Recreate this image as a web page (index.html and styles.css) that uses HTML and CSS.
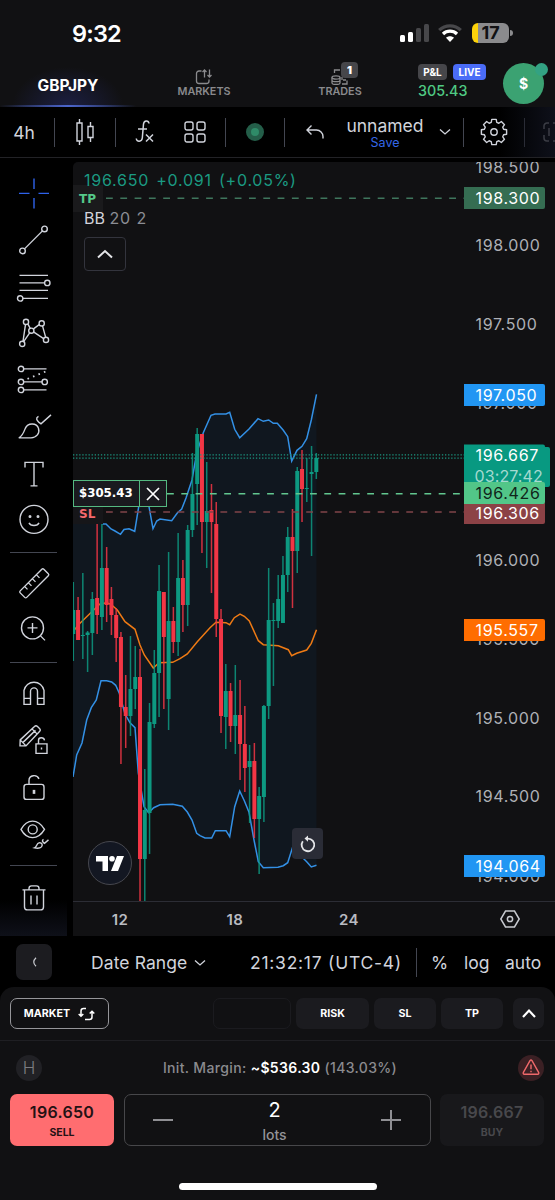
FILE: index.html
```html
<!DOCTYPE html>
<html lang="en">
<head>
    <meta charset="UTF-8">
    <meta name="viewport" content="width=device-width, initial-scale=1.0">
    <title>GBPJPY</title>
    <link rel="stylesheet" href="styles.css">
</head>
<body>
    <div class="status-bar">
        <span class="clock">9:32</span>
        <div class="status-icons">
            <svg width="29" height="18" viewBox="0 0 29 18">
                <rect x="0" y="11" width="5" height="7" rx="1.5" fill="#fff"/>
                <rect x="8" y="8" width="5" height="10" rx="1.5" fill="#fff"/>
                <rect x="16" y="4" width="5" height="14" rx="1.5" fill="#47474a"/>
                <rect x="24" y="0" width="5" height="18" rx="1.5" fill="#47474a"/>
            </svg>
            <svg width="24" height="18" viewBox="0 0 24 18" fill="none" stroke-width="3.2">
                <path d="M1.2 6.2C7.2 .3 16.8 .3 22.8 6.2" stroke="#47474a"/>
                <path d="M5 10c3.9-3.8 10.1-3.8 14 0" stroke="#fff"/>
                <path d="M12 18 8 13.8c2.3-2 5.7-2 8 0z" fill="#fff"/>
            </svg>
            <div class="battery"><span>17</span></div>
        </div>
    </div>

    <div class="tabs">
        <div class="tab active">GBPJPY</div>
        <div class="tab">
            <svg width="18" height="16" viewBox="0 0 18 16" fill="none" stroke="#8a8a8d" stroke-width="1.3">
                <path d="M6.500 2H4a2.500 2.500 0 0 0-2.500 2.500V12A2.500 2.500 0 0 0 4 14.500h7.500A2.500 2.500 0 0 0 14 12v-1.500M9.500 8.500V1M7.500 3l2-2 2 2M14.500 .5V8M12.500 6l2 2 2-2"/>
            </svg>
            <span>MARKETS</span>
        </div>
        <div class="tab">
            <svg width="18" height="16" viewBox="0 0 18 16" fill="none" stroke="#8a8a8d" stroke-width="1.3">
                <ellipse cx="5" cy="8.500" rx="4" ry="1.600"/>
                <path d="M1 8.500V14c0 2 8 2 8 0V8.500M1 11.200c0 2 8 2 8 0M3.500 4V1H9M11 15h5v-3.500M12 11h3M11 8v3"/>
            </svg>
            <span>TRADES</span>
            <b class="badge">1</b>
        </div>
        <div class="account">
            <div class="account-tags"><span class="tag">P&amp;L</span><span class="tag live">LIVE</span></div>
            <div class="profit">305.43</div>
        </div>
        <div class="avatar">$</div>
    </div>

    <div class="toolbar">
        <div class="tool interval">4h</div>
        <i class="sep"></i>
        <div class="tool wide">
            <svg width="20" height="28" viewBox="0 0 20 28" fill="none" stroke="#d1d4dc" stroke-width="1.4">
                <path d="M2 5h5v18H2zM4.500 1v4M4.500 23v4M13 8.500h5v11h-5zM15.500 4v4.500M15.500 19.500V24"/>
            </svg>
        </div>
        <i class="sep"></i>
        <div class="tool fx">
            <svg width="20" height="26" viewBox="0 0 20 26" fill="none" stroke="#d1d4dc" stroke-width="1.5">
                <path d="M14 4.500C13.500 1 9 1 8.500 5l-1.200 14c-.3 4-5.800 4.500-6 .5M3 10h9M11 15.500l7 7M18 15.500l-7 7"/>
            </svg>
        </div>
        <div class="tool layouts">
            <svg width="22" height="22" viewBox="0 0 22 22" fill="none" stroke="#d1d4dc" stroke-width="1.4">
                <rect x="1" y="1" width="8" height="8" rx="2"/><rect x="13" y="1" width="8" height="8" rx="2"/>
                <rect x="1" y="13" width="8" height="8" rx="2"/><rect x="13" y="13" width="8" height="8" rx="2"/>
            </svg>
        </div>
        <i class="sep"></i>
        <div class="tool connection"><span class="live-dot"></span></div>
        <i class="sep"></i>
        <div class="tool undo">
            <svg width="18" height="14" viewBox="0 0 18 14" fill="none" stroke="#d1d4dc" stroke-width="1.4">
                <path d="M5.500 .5 1 5l4.500 4.500M1 5h9.500a6.500 6.500 0 0 1 6.500 6.500v2"/>
            </svg>
        </div>
        <div class="tool layout-name">unnamed<small>Save</small></div>
        <div class="tool arrow">
            <svg width="12" height="8" viewBox="0 0 12 8" fill="none" stroke="#d1d4dc" stroke-width="1.300"><path d="m1 1.500 5 4.500 5-4.500"/></svg>
        </div>
        <i class="sep"></i>
        <div class="tool gear">
            <svg width="28" height="28" viewBox="0 0 28 28" fill="none" stroke="#d1d4dc" stroke-width="1.400" stroke-linejoin="round">
                <circle cx="14" cy="14" r="3.200"/>
                <path id="gear"/>
            </svg>
        </div>
        <i class="sep faint"></i>
        <svg class="fullscreen" width="12" height="20" viewBox="0 0 12 20" fill="none" stroke="#3b3d45" stroke-width="1.500">
            <path d="M6 1H4a3 3 0 0 0-3 3v3M1 13v3a3 3 0 0 0 3 3h2M10 1h2M10 19h2M6 6v8"/>
        </svg>
    </div>

    <div class="workspace">
        <div class="drawing-bar">
            <svg class="draw-icon cross" viewBox="0 0 32 32"><path d="M16 1v10.500M16 20.500V31M1 16h10.500M20.500 16H31"/></svg>
            <svg class="draw-icon" viewBox="0 0 32 32"><path d="M6.500 24.500 24.500 6.500"/><circle cx="4.500" cy="26.500" r="2.800"/><circle cx="26.500" cy="4.500" r="2.800"/></svg>
            <svg class="draw-icon" viewBox="0 0 32 32"><path d="M1.500 4H30M1.500 11.500h25M1.500 19H30M4.500 27H30"/><circle cx="29.300" cy="11.500" r="2.700"/><circle cx="2.200" cy="27" r="2.700"/></svg>
            <svg class="draw-icon" viewBox="0 0 32 32"><path d="M7.500 7 5 24M9.800 6.500l2.700 5M12 15l-6.500 9.500M15.500 11.500l6-4.500M15.500 14.500l10.500 7M24.500 8.500l3.200 11.500"/><circle cx="8" cy="4.500" r="2.600"/><circle cx="13.300" cy="13.300" r="2.600"/><circle cx="23.700" cy="6" r="2.600"/><circle cx="4.200" cy="26.500" r="2.600"/><circle cx="28" cy="22.500" r="2.600"/></svg>
            <svg class="draw-icon" viewBox="0 0 32 32"><path d="M5.500 4.500h23M5.500 17.500h18.500M5.500 25.500h23"/><path d="M9.500 14.500 28 7" stroke-dasharray="1.600 4.300" stroke-width="1.800"/><circle cx="3" cy="4.500" r="2.700"/><circle cx="3" cy="17.500" r="2.700"/><circle cx="3" cy="25.500" r="2.700"/><circle cx="26.700" cy="17.500" r="2.700"/></svg>
            <svg class="draw-icon" viewBox="0 0 32 32"><path d="M.8 26.500c3.500-1.500 5-5.500 6.500-9.500 2.500-6 11.500-5.500 13.200 0C22 22 18.500 26.300 13 26.500zM20.500 5c-3 1.500-2 4 .5 6l2 1.500L33 3.500"/></svg>
            <svg class="draw-icon" viewBox="0 0 32 32"><path d="M7 9V4h18v5M16 4v23.500M12.500 27.500h7"/></svg>
            <svg class="draw-icon" viewBox="0 0 32 32"><circle cx="16" cy="15" r="14"/><path d="M11 18.500c1.500 3.500 8.500 3.500 10 0"/><circle cx="12" cy="12" r=".8"/><circle cx="20" cy="12" r=".8"/></svg>
            <hr>
            <svg class="draw-icon" viewBox="0 0 32 32"><path d="M2.200 23.500 23.800 1.900q1-1 2 0l4.500 4.500q1 1 0 2L8.700 30q-1 1-2 0l-4.500-4.500q-1-1 0-2zM6.500 19l3 3M10.500 15.500l3 3M14.500 11.500l3 3M18.500 7.500l3 3"/></svg>
            <svg class="draw-icon" viewBox="0 0 32 32"><circle cx="14.500" cy="13.500" r="11"/><path d="M22.500 21.500 27 26M14.500 8.500v10M9.500 13.500h10"/></svg>
            <hr>
            <svg class="draw-icon" viewBox="0 0 32 32"><path d="M6 27V13a10.200 10.200 0 0 1 20 0v14h-6.500V14a3.500 3.500 0 0 0-7 0v13zM6 21h6.500M19.500 21H26"/></svg>
            <svg class="draw-icon" viewBox="0 0 32 32"><path d="M2.200 15.500 16.500 2.200q1.500-1.500 3 0l2 2q1.500 1.500 0 3L8 21.500H2zM2.200 15.500 8 21.500M14 4.500l5.500 5.500M5 18 17.500 6M18 19.500h11v9.500H18zM20.500 19.500V16c0-3.500 5.500-3.500 6 0M23.500 23v2"/></svg>
            <svg class="draw-icon" viewBox="0 0 32 32"><rect x="6" y="13" width="20" height="15" rx="2.500"/><path d="M11 13V9c0-5.500 8-6.500 10-1.500"/><path d="M16 18.500v4" stroke-width="2.600"/></svg>
            <svg class="draw-icon" viewBox="0 0 32 32"><path d="M3 11c6-11 17-11 23.500 0C20 22 9 22 3 11z"/><circle cx="14.700" cy="11" r="4.500"/><path d="M16.500 29.500c2.500-1 2-4.500 4.500-5 3-.5 4 2 2.500 4-1.500 1.500-4.500 1.500-7 1zM25.500 21c-2 1-1 2.500 1 4l4-3.500"/></svg>
            <hr>
            <svg class="draw-icon" viewBox="0 0 32 32"><path d="M4.500 8.500h23M11 8.500V7Q11 4.500 13.500 4.500h5Q21 4.500 21 7v1.500M6.500 8.500v17q0 3 3 3h13q3 0 3-3v-17M13 14v9M19 14v9"/></svg>
        </div>

        <div class="chart">
            <svg class="chart-canvas" width="482" height="774" viewBox="73 162 482 774">
                <g id="bands"></g>
                <g id="candles"></g>
                <g id="lines"></g>
                <path d="M73 901.500h482" stroke="#2c2d35"/>
                <g id="scale" class="scale-text"></g>
                <g class="time-text"><text x="120" y="925">12</text><text x="235" y="925">18</text><text x="349" y="925">24</text></g>
                <g fill="none" stroke="#c8cad0" stroke-width="1.500"><path d="M505.500 911h9l4.700 8-4.700 8h-9l-4.700-8z"/><circle cx="510" cy="919" r="2.600"/></g>
            </svg>

            <div class="legend">
                <div class="legend-price">196.650 <span>+0.091 (+0.05%)</span></div>
                <div class="legend-study">BB <span>20 2</span></div>
                <div class="collapse">
                    <svg width="18" height="10" viewBox="0 0 18 10" fill="none" stroke="#e4e5e8" stroke-width="2"><path d="M2 8.500 9 2l7 6.500"/></svg>
                </div>
            </div>
            <div class="line-label tp-label">TP</div>
            <div class="line-label sl-label">SL</div>
            <div class="position"><span>$305.43</span>
                <svg width="26" height="26" viewBox="0 0 26 26" stroke="#fff" stroke-width="1.700"><path d="m7 7 12 12M19 7 7 19"/></svg>
            </div>
            <div class="tv-logo">
                <svg width="28" height="15" viewBox="0 0 28 15" fill="#fff"><path d="M0 0h12v15H6.500V5.500H0zM21 0h7l-6 15h-7z"/><circle cx="16" cy="2.800" r="2.800"/></svg>
            </div>
            <div class="reset">
                <svg width="18" height="18" viewBox="0 0 18 18" fill="none" stroke="#e4e5e8" stroke-width="1.800"><path d="M3.800 6.300A6.300 6.300 0 1 0 9 3.600H7"/><path d="M9 .5 5.500 3.600 9 6.800z" fill="#e4e5e8" stroke="none"/></svg>
            </div>
        </div>
    </div>

    <div class="range-bar">
        <div class="back">
            <svg width="5" height="10" viewBox="0 0 5 10" fill="none" stroke="#c8cad0" stroke-width="1.200"><path d="M4 .7Q-.5 5 4 9.300"/></svg>
        </div>
        <div class="date-range">Date Range
            <svg width="12" height="8" viewBox="0 0 12 8" fill="none" stroke="#d1d4dc" stroke-width="1.300"><path d="m1 1.500 5 4.500 5-4.500"/></svg>
        </div>
        <div class="time">21:32:17 (UTC-4)</div>
        <i class="sep"></i>
        <div class="percent">%</div>
        <div class="log">log</div>
        <div class="auto">auto</div>
    </div>

    <div class="order-panel">
        <div class="order-options">
            <div class="market">MARKET
                <svg width="17" height="14" viewBox="0 0 17 14" fill="none" stroke="#fff" stroke-width="1.500"><path d="M8 1.500H5.500Q3 1.500 3 4v5M.7 7 3 9.300 5.300 7M7 12.500h4.500q2.500 0 2.500-2.500V4.500M11.700 6.500 14 4.200l2.300 2.300"/></svg>
            </div>
            <div class="option blank"></div>
            <div class="option risk">RISK</div>
            <div class="option">SL</div>
            <div class="option">TP</div>
            <div class="option expand">
                <svg width="16" height="11" viewBox="0 0 16 11" fill="none" stroke="#fff" stroke-width="2.200"><path d="m2 9 6-6.500L14 9"/></svg>
            </div>
        </div>
        <div class="margin-row">
            <span class="round">H</span>
            <p>Init. Margin: <b>~$536.30</b> (143.03%)</p>
            <span class="round warn">
                <svg width="18" height="17" viewBox="0 0 18 17" fill="none" stroke="#f0696b" stroke-width="1.400" stroke-linejoin="round"><path d="M8 1.700q1-1.500 2 0l6.600 11.600q.7 1.700-1 1.900H2.400q-1.700-.2-1-1.900zM9 5.500v4.700M9 11.800v1.400"/></svg>
            </span>
        </div>
        <div class="trade-row">
            <div class="trade sell">196.650<small>SELL</small></div>
            <div class="lots">
                <i class="minus"></i>
                <div class="amount">2<small>lots</small></div>
                <i class="plus"></i>
            </div>
            <div class="trade buy">196.667<small>BUY</small></div>
        </div>
        <div class="home-indicator"></div>
    </div>

    <script src="chart.js"></script>
</body>
</html>
```
FILE: styles.css
```css
* {
    box-sizing: border-box;
}

body {
    margin: 0;
    width: 555px;
    height: 1200px;
    overflow: hidden;
    background: #000;
    color: #d1d4dc;
    font-family: Inter, 'Liberation Sans', sans-serif;
}

svg {
    display: block;
    flex: none;
}

/* Status bar */
.status-bar {
    height: 62px;
    padding: 4px 43px 0 72px;
    display: flex;
    align-items: center;
    justify-content: space-between;
    background: #111113;
}

.clock {
    color: #fff;
    font-size: 23.5px;
    font-weight: 600;
    letter-spacing: -0.8px;
}

.status-icons {
    display: flex;
    align-items: center;
    gap: 9px;
}

.battery {
    position: relative;
    width: 37px;
    height: 20px;
    margin: 0 3px 0 1px;
    border-radius: 6px;
    background: linear-gradient(90deg, #fdd20a 6px, #8b8b8d 6px);
    color: #111113;
    font-size: 18px;
    font-weight: 700;
    line-height: 20px;
    text-align: center;
}

.battery::after {
    content: '';
    position: absolute;
    right: -4px;
    top: 7px;
    width: 3px;
    height: 6px;
    border-radius: 0 3px 3px 0;
    background: #8b8b8d;
}

/* Tabs */
.tabs {
    height: 45px;
    display: flex;
    background: #111113;
}

.tab {
    position: relative;
    width: 136px;
    padding-top: 7px;
    display: flex;
    flex-direction: column;
    align-items: center;
    color: #8a8a8d;
    font-size: 10.8px;
    font-weight: 600;
    line-height: 14px;
}

.tab.active {
    padding-top: 17px;
    color: #fff;
    font-size: 15.5px;
    font-weight: 700;
    background: radial-gradient(ellipse 56px 40px at 50% 100%, #1c1f42, rgba(17, 17, 19, 0));
}

.tab.active::after {
    content: '';
    position: absolute;
    left: 0;
    bottom: 0;
    width: 100%;
    height: 2px;
    background: linear-gradient(90deg, transparent, #4c66cc, transparent);
}

.badge {
    position: absolute;
    left: 69px;
    top: 0;
    width: 17px;
    height: 16px;
    border-radius: 4px;
    background: #46464a;
    color: #fff;
    font-size: 11px;
    line-height: 16px;
    text-align: center;
}

.account {
    width: 85px;
    margin-left: 10px;
    padding-top: 2px;
}

.account-tags {
    display: flex;
    gap: 6px;
}

.tag {
    width: 29px;
    height: 16px;
    border-radius: 4px;
    background: #46464a;
    color: #fff;
    font-size: 10px;
    font-weight: 700;
    line-height: 16px;
    text-align: center;
}

.tag.live {
    width: 33px;
    background: #4a6cf7;
}

.profit {
    margin-top: 2px;
    color: #4fc983;
    font-size: 14.3px;
    font-weight: 500;
    line-height: 18px;
}

.avatar {
    position: relative;
    width: 41px;
    height: 41px;
    margin-top: 1px;
    border-radius: 50%;
    background: #3ba272;
    color: #fff;
    font-size: 14px;
    font-weight: 700;
    line-height: 42px;
    text-align: center;
}

.avatar::after {
    content: '';
    position: absolute;
    right: -4px;
    top: 0;
    width: 13px;
    height: 13px;
    border-radius: 50%;
    background: #33a283;
}

/* Top toolbar */
.toolbar {
    height: 51px;
    display: flex;
    align-items: center;
    background: linear-gradient(90deg, #000 500px, #0e101a);
    border-bottom: 1px solid #222226;
}

.tool {
    flex: none;
    display: flex;
    align-items: center;
    justify-content: center;
}

.sep {
    flex: none;
    width: 1px;
    height: 29px;
    background: #434651;
}

.sep.faint {
    background: #2a2c36;
}

.interval {
    width: 48px;
    margin-right: 6px;
    font-size: 17.5px;
}

.wide { width: 60px; }
.fx { width: 58px; }
.layouts { width: 41px; margin-right: 10px; }
.connection { width: 58px; }
.undo { width: 59px; }
.arrow { width: 37px; }
.gear { width: 60px; }

.live-dot {
    width: 18px;
    height: 18px;
    border-radius: 50%;
    border: 5px solid #245e49;
    background: #2f8b68;
}

.layout-name {
    width: 82px;
    padding-top: 2px;
    flex-direction: column;
    font-size: 17.5px;
    line-height: 20px;
}

.layout-name small {
    color: #3467e8;
    font-size: 12.5px;
    line-height: 14px;
}

.fullscreen {
    margin-left: 18px;
}

/* Workspace */
.workspace {
    height: 778px;
    display: flex;
}

.drawing-bar {
    width: 67px;
    margin-right: 6px;
    padding: 12px 0 0;
    background: linear-gradient(#000 742px, #0e1019);
    display: flex;
    flex-direction: column;
    align-items: center;
}

.drawing-bar hr {
    width: 47px;
    height: 1px;
    margin: 7.7px 0;
    border: 0;
    background: #434651;
}

.draw-icon {
    width: 32px;
    height: 46.75px;
    overflow: visible;
    fill: none;
    stroke: #d1d4dc;
    stroke-width: 1.4;
}

.draw-icon.cross {
    stroke: #2e62ea;
}

/* Chart */
.chart {
    position: relative;
    width: 482px;
    margin-top: 4px;
    background: #111113;
    border-top-left-radius: 5px;
    overflow: hidden;
}

.scale-text {
    font-size: 16px;
    letter-spacing: 0.65px;
}

.scale-text .countdown {
    letter-spacing: 0.1px;
}

.time-text {
    fill: #b9bbc1;
    font-size: 15px;
    font-weight: 600;
    text-anchor: middle;
    letter-spacing: 0.5px;
}

.legend {
    position: absolute;
    left: 11px;
    top: 8px;
    z-index: 2;
    font-size: 16px;
    line-height: 20px;
}

.legend-price {
    color: #1b9a82;
    letter-spacing: 0.75px;
    word-spacing: 2px;
}

.legend-study {
    margin-top: 18px;
}

.legend-study span {
    color: #8b8d94;
    letter-spacing: 0.9px;
}

.collapse {
    width: 42px;
    height: 34px;
    margin-top: 9px;
    border: 1px solid #33343d;
    border-radius: 4px;
    display: flex;
    align-items: center;
    justify-content: center;
}

.line-label {
    position: absolute;
    left: 0;
    width: 30px;
    height: 27px;
    padding-left: 6px;
    background: #1a1a1c;
    font-family: 'DejaVu Sans', sans-serif;
    font-size: 12px;
    font-weight: 700;
    line-height: 29px;
}

.tp-label {
    top: 23px;
    color: #55c98a;
}

.sl-label {
    top: 338px;
    height: 24px;
    background: #161619;
    color: #f5696d;
    line-height: 28px;
}

.position {
    position: absolute;
    left: 0;
    top: 318px;
    width: 94px;
    height: 27px;
    border: 1.5px solid #55b981;
    background: #1a1a1f;
    display: flex;
    align-items: center;
    justify-content: space-between;
}

.position span {
    width: 67px;
    border-right: 1px solid #55b981;
    padding-left: 5px;
    color: #fff;
    font-family: 'DejaVu Sans', sans-serif;
    font-size: 11.8px;
    font-weight: 700;
    line-height: 27px;
}

.tv-logo {
    position: absolute;
    left: 15px;
    top: 679px;
    width: 44px;
    height: 44px;
    border: 1.5px solid #46474e;
    border-radius: 50%;
    background: #131722;
    display: flex;
    align-items: center;
    justify-content: center;
}

.reset {
    position: absolute;
    left: 219px;
    top: 666px;
    width: 31px;
    height: 31px;
    border-radius: 4px;
    background: #2a2c36;
    display: flex;
    align-items: center;
    justify-content: center;
}

/* Range bar */
.range-bar {
    height: 51px;
    padding: 2px 0 0 16px;
    display: flex;
    align-items: center;
    font-size: 17.5px;
    white-space: nowrap;
}

.back {
    width: 36px;
    height: 36px;
    margin-top: -2px;
    border-radius: 7px;
    background: #1c1c20;
    display: flex;
    align-items: center;
    justify-content: center;
}

.date-range {
    width: 159px;
    margin-left: 39px;
    display: flex;
    align-items: center;
    gap: 7px;
    letter-spacing: 0.1px;
}

.time {
    width: 166px;
    letter-spacing: 0.75px;
}

.percent { width: 33px; margin-left: 14px; }
.log { width: 41px; }

/* Order panel */
.order-panel {
    height: 213px;
    border-radius: 14px 14px 0 0;
    background: #111113;
}

.order-options {
    height: 54px;
    padding: 11px 11px 0 10px;
    border-bottom: 1px solid #1f1f23;
    display: flex;
    gap: 5px;
}

.market {
    width: 99px;
    height: 31px;
    margin-right: auto;
    border: 1px solid #96969a;
    border-radius: 7px;
    color: #fff;
    font-size: 10.7px;
    font-weight: 700;
    display: flex;
    align-items: center;
    justify-content: center;
    gap: 8px;
}

.option {
    width: 62px;
    height: 31px;
    border-radius: 7px;
    background: #1b1b1f;
    color: #fff;
    font-size: 10.7px;
    font-weight: 700;
    display: flex;
    align-items: center;
    justify-content: center;
}

.option.blank {
    width: 78px;
    border: 1px solid #1b1b1f;
    background: none;
}

.option.risk { width: 73px; }

.option.expand {
    width: 31px;
    margin-left: 5px;
}

.margin-row {
    height: 53px;
    padding: 0 11px 0 16px;
    display: flex;
    align-items: center;
    justify-content: space-between;
}

.margin-row p {
    margin: 0;
    padding-left: 0;
    color: #8b8b8f;
    font-size: 14px;
    font-weight: 500;
    letter-spacing: 0.35px;
}

.margin-row b {
    color: #fff;
    font-weight: 600;
}

.round {
    width: 26px;
    height: 26px;
    border-radius: 50%;
    background: #212125;
    color: #7b7b80;
    font-size: 17px;
    font-weight: 300;
    line-height: 26px;
    text-align: center;
}

.warn {
    background: #3b2024;
    display: flex;
    align-items: center;
    justify-content: center;
}

.trade-row {
    padding: 0 11px 0 10px;
    display: flex;
    justify-content: space-between;
}

.trade {
    width: 104px;
    height: 52px;
    padding-top: 7px;
    border-radius: 7px;
    font-size: 16px;
    font-weight: 600;
    letter-spacing: 0.3px;
    line-height: 22px;
    text-align: center;
}

.trade small {
    display: block;
    font-size: 10.5px;
    font-weight: 700;
    letter-spacing: 0;
    line-height: 20px;
}

.sell {
    background: #ff6d70;
    color: #241214;
}

.buy {
    background: #18181b;
    color: #48484c;
}

.lots {
    width: 307px;
    height: 52px;
    padding: 0 28px;
    border: 1px solid #47474a;
    border-radius: 7px;
    display: flex;
    align-items: center;
    justify-content: space-between;
}

.amount {
    padding: 4px 5px 0 0;
    color: #fff;
    font-size: 20px;
    line-height: 26px;
    text-align: center;
}

.amount small {
    display: block;
    color: #939397;
    font-size: 14px;
    font-weight: 500;
    line-height: 24px;
}

.minus,
.plus {
    width: 20px;
    height: 20px;
    background: linear-gradient(#8f8f93, #8f8f93) center / 20px 2px no-repeat;
}

.plus {
    background:
        linear-gradient(#8f8f93, #8f8f93) center / 20px 2px no-repeat,
        linear-gradient(#8f8f93, #8f8f93) center / 2px 20px no-repeat;
}

.home-indicator {
    width: 198px;
    height: 7px;
    margin: 37px 0 0 179px;
    border-radius: 4px;
    background: #fff;
}
```
FILE: chart.js
```js
const UP = '#0d9981';
const DOWN = '#f23645';

// [high, low, body top, body bottom, direction]
const candles = [
    [582, 661, 610, 634, 1], [597, 640, 610, 640, 0], [573, 659, 635, 636, 1], [631, 672, 632.5, 635, 1],
    [592, 655, 599, 633, 1], [524, 634, 598, 615, 0], [524, 630, 568, 617, 1], [547, 622, 568, 605, 0],
    [587, 635, 599, 615, 0], [608, 662, 615, 638, 0], [632, 764, 637, 707, 0], [675, 748, 707, 716, 0],
    [636, 736, 689, 716, 1], [646, 709, 677, 689, 1], [649, 901, 677, 859, 0], [769, 901, 810, 859, 1],
    [703, 854, 722, 813, 1], [650, 728, 673, 724, 1], [565, 717, 591, 673, 1], [592, 709, 592, 637, 0],
    [552, 730, 621, 699, 1], [607, 653, 621, 642, 0], [533, 656, 578, 642, 1], [560, 632, 578, 605, 0],
    [525, 626, 530, 605, 1], [453, 537, 494, 530, 1], [428, 525, 434, 484, 1], [434, 553, 434, 522, 0],
    [462, 568, 511, 522, 1], [484, 593, 510, 522, 0], [502, 637, 524, 619, 0], [609, 733, 619, 716, 0],
    [664, 749, 691, 717, 1], [683, 742, 691, 726, 0], [665, 754, 715, 726, 1], [680, 780, 715, 744, 0],
    [706, 792, 744, 768, 0], [745, 823, 761, 767, 1], [743, 838, 761, 819, 0], [787, 874, 796, 819, 1],
    [705, 822, 706, 797, 1], [568, 719, 620, 706, 1], [603, 686, 620, 621, 1], [575, 628, 599, 621, 1],
    [556, 623, 575, 623, 1], [527, 592, 537, 575, 1], [509, 608, 537, 551, 0], [467, 573, 471, 551, 1],
    [450, 522, 469, 489, 0], [458, 502, 488, 489, 1], [446, 556, 472, 474, 1], [453, 479, 458, 472, 1]
];

const upper = '73,522 100,522 103,524 106,524 111,529 115,531 120.500,534.300 124,529.500 129,528.700 134.700,531.300 138.700,506.700 141,498 146,498 149,506.700 153,528.700 156.700,521 160,519 171.700,520.700 177.300,513 181.700,509 186,498 192,480 196.700,453 203.300,432.700 211,415.300 215,414 226,414 229.700,412.300 234.700,429.300 239.700,437.700 249,429 258,418.700 263.300,421.300 268.700,420 273.300,423.300 277.300,423.300 283.300,430.300 287.700,436.700 291.700,461 297,450.300 302,446.300 306.700,438.700 311.300,420 316.500,394.300';
const lower = '73,777 76.700,755 82,743 86.700,720 91.300,707.700 96.300,700 101,680.700 106.700,680.700 111.700,682 115.700,685.300 119.300,693.300 125,714 130,722.700 135,727.700 138.300,773 141.700,793 144,806.700 148.700,812.700 153.700,807.700 160,804.700 172.700,804.300 182.300,806.300 187.300,812 192,820 196.700,833.300 200,835.700 205,838 211.700,838 215.300,830.700 226,830.700 229.700,836.700 234.700,806.700 239.700,791 244.300,800.700 249,812.300 254,840 258.300,861.700 263.300,867.700 278,867.300 283.300,865.700 287.700,862.700 292.300,848.300 297,852 302.700,857.700 306.700,861.700 311.300,867 316.500,865.300';
const middle = '73,631.500 80,623.300 91.300,612.300 100,604 106.700,602.700 111,604.300 117.300,610 125,621.700 135,629.300 140,645 144.300,655 153.300,668 159,662.700 172.700,662.300 180,658.700 187.300,654 197.300,641.700 210,627.700 216,622.300 226,622.700 229.700,624.700 234.300,617.700 240,614 244.300,616.300 249.300,621 258.300,640.700 263.300,644.700 278.300,645.700 288.300,649.700 291.700,655.700 296.700,653.300 306.700,650 311.300,643.300 316.500,629.700';

const lowerBack = lower.split(' ').reverse().join(' ');
document.getElementById('bands').innerHTML =
    `<polygon points="${upper} ${lowerBack}" fill="#10171f"/>` +
    `<g fill="none" stroke-width="1.500"><polyline points="${upper}" stroke="#3390e5"/>` +
    `<polyline points="${lower}" stroke="#3390e5"/><polyline points="${middle}" stroke="#ee7a14"/></g>`;

document.getElementById('candles').innerHTML = candles.map(([high, low, top, bottom, up], i) => {
    const x = 73.300 + i * 4.765;
    const color = up ? UP : DOWN;
    return `<rect x="${x - 0.75}" y="${high}" width="1.500" height="${low - high}" fill="${color}" opacity=".85"/>` +
        `<rect x="${x - 2}" y="${top}" width="4" height="${bottom - top}" fill="${color}"/>`;
}).join('');

document.getElementById('lines').innerHTML =
    `<path d="M73 454.800h391M73 458.200h391" stroke="#1b9680" stroke-width="1.300" stroke-dasharray="1.300 1.800"/>
    <path d="M104 198.300h360" stroke="#3f765d" stroke-width="1.400" stroke-dasharray="6.800 7.500" stroke-dashoffset="-2"/>
    <path d="M167 493.700h297" stroke="#62c78f" stroke-width="1.500" stroke-dasharray="6.800 7.500"/>
    <path d="M104 512h360" stroke="#80444a" stroke-width="1.400" stroke-dasharray="6.800 7.500" stroke-dashoffset="-2"/>`;

// Price scale: plain labels first, then the coloured tags over them
const prices = [['198.500', 167], ['198.000', 245], ['197.500', 324], ['197.000', 403], ['196.000', 560.5],
    ['195.500', 639], ['195.000', 718], ['194.500', 796.5], ['194.000', 876]];
const tags = [['198.300', 187, 22, '#356d52', '#fff'], ['197.050', 384, 22, '#2196f3', '#fff'],
    ['196.667', 444.5, 40, '#089981', '#fff'], ['196.306', 502, 22, '#8c4246', '#fff'],
    ['196.426', 482, 22, '#52c688', '#10241a'], ['195.557', 619, 22, '#ff6d00', '#fff'],
    ['194.064', 855, 22, '#2196f3', '#fff']];

document.getElementById('scale').innerHTML =
    prices.map(([text, y]) => `<text x="475.500" y="${y + 5.7}" fill="#aeb0b6">${text}</text>`).join('') +
    '<rect x="464" y="447" width="86" height="40" rx="2" fill="#089981"/>' +
    tags.map(([text, y, height, bg, color]) =>
        `<path d="M464 ${y}h79q2 0 2 2v${height - 4}q0 2-2 2h-79z" fill="${bg}"/>` +
        (height > 22 ? '<text class="countdown" x="474.500" y="482" fill="#a5d9d0">03:27:42</text>' : '') +
        `<text x="475.500" y="${y + 16.7}" fill="${color}">${text}</text>`).join('');

// Gear outline with eight teeth
let gear = '';
for (let i = 0; i < 8; i++) {
    [[-16, 10], [-10, 12.8], [10, 12.8], [16, 10]].forEach(([angle, r]) => {
        const a = (i * 45 + angle) * Math.PI / 180;
        gear += `${gear ? 'L' : 'M'}${(14 + r * Math.sin(a)).toFixed(2)} ${(14 - r * Math.cos(a)).toFixed(2)}`;
    });
}
document.getElementById('gear').setAttribute('d', gear + 'Z');
```
